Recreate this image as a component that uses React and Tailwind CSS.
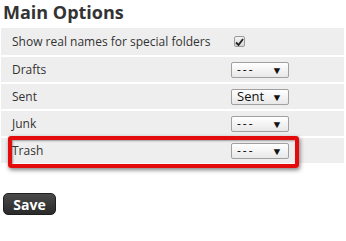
export default function App() {
  const Select = ({ value }) => (
    <div className="flex h-[16px] w-[58px] items-center justify-between rounded-[2px] border border-[#a0a0a0] bg-gradient-to-b from-white to-[#e8e8e8] pl-[5px] pr-[6px] leading-none text-[#111]">
      {value === "Sent" ? (
        <span className="text-[13px]">Sent</span>
      ) : (
        <span className="text-[12px] tracking-[2px]">---</span>
      )}
      <span className="text-[10px] scale-x-110">▼</span>
    </div>
  );
  const Row = ({ label, children, h = "h-[25px]", w = "w-[219px]" }) => (
    <div className={`flex ${h} items-center bg-[#eeeeee] pl-[11px]`}>
      <div className={`${w} text-[12px] text-[#333]`}>{label}</div>
      {children}
    </div>
  );
  return (
    <div className="relative h-[241px] w-[346px] bg-white font-['Open_Sans',sans-serif]">
      <div className="pl-[3px] pt-[0px] text-[18px] font-bold leading-[24px] text-[#333]">Main Options</div>
      <div className="mt-[4px] flex w-[344px] flex-col gap-[2px] pl-[1px]">
        <Row label="Show real names for special folders" h="h-[27px]" w="w-[222px]">
          <div className="flex h-[11px] w-[11px] items-center justify-center rounded-[2px] border border-[#9a9a9a] bg-gradient-to-b from-[#f4f4f4] to-[#d8d8d8]">
            <svg width="9" height="8" viewBox="0 0 9 8"><path d="M1 4.5 L3.5 7 L8 1" stroke="#222" strokeWidth="1.8" fill="none" /></svg>
          </div>
        </Row>
        <Row label="Drafts"><Select value="---" /></Row>
        <Row label="Sent"><Select value="Sent" /></Row>
        <Row label="Junk"><Select value="---" /></Row>
        <Row label="Trash"><Select value="---" /></Row>
      </div>
      <div className="absolute left-[8px] top-[136px] h-[32px] w-[291px] rounded-[3px] border-[4px] border-[#e30b0b] shadow-[1px_2px_4px_rgba(0,0,0,0.5),inset_1px_1px_2px_rgba(0,0,0,0.35)]" />
      <div className="mt-[30px] ml-[3px] flex h-[22px] w-[53px] items-center justify-center rounded-[5px] border border-[#1e1e1e] bg-gradient-to-b from-[#4a4a4a] to-[#2a2a2a] text-[14px] font-bold text-white">Save</div>
    </div>
  );
}
